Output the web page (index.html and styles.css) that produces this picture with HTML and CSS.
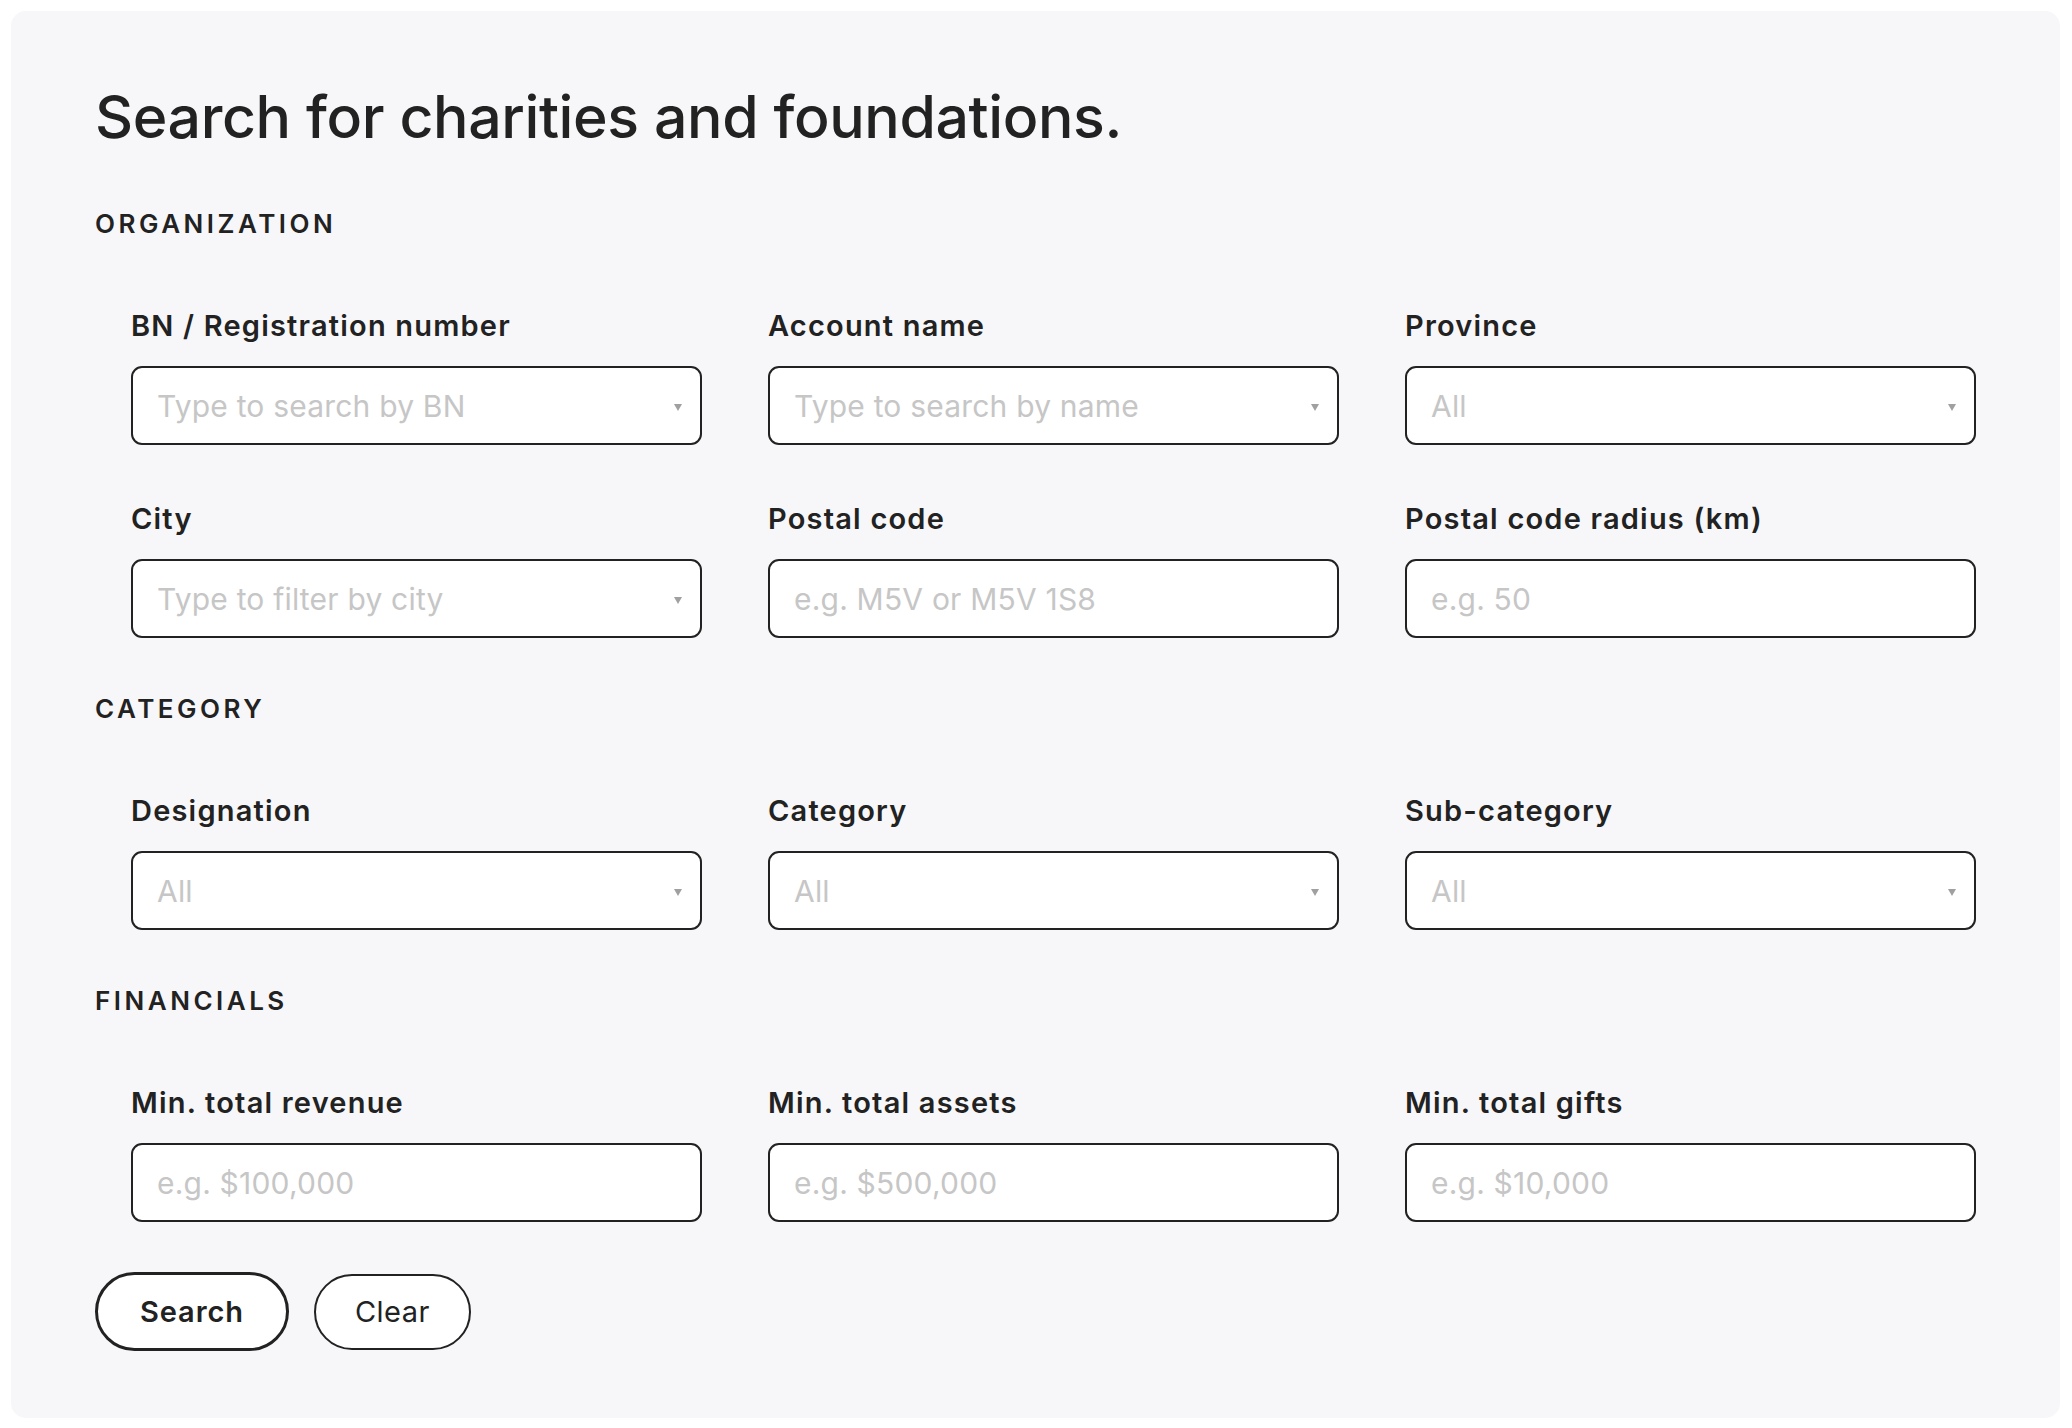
FILE: index.html
```html
<!DOCTYPE html>
<html lang="en">
<head>
<meta charset="utf-8">
<title>Search for charities and foundations</title>
<link rel="stylesheet" href="styles.css">
</head>
<body>
<main class="card">
  <h1 class="title">Search for charities and foundations.</h1>

  <h2 class="section">ORGANIZATION</h2>
  <div class="grid">
    <div class="field">
      <label class="label">BN / Registration number</label>
      <div class="control select"><input class="input" placeholder="Type to search by BN"><span class="caret"></span></div>
    </div>
    <div class="field">
      <label class="label">Account name</label>
      <div class="control select"><input class="input" placeholder="Type to search by name"><span class="caret"></span></div>
    </div>
    <div class="field">
      <label class="label">Province</label>
      <div class="control select"><input class="input" placeholder="All"><span class="caret"></span></div>
    </div>
    <div class="field">
      <label class="label">City</label>
      <div class="control select"><input class="input" placeholder="Type to filter by city"><span class="caret"></span></div>
    </div>
    <div class="field">
      <label class="label">Postal code</label>
      <div class="control"><input class="input" placeholder="e.g. M5V or M5V 1S8"></div>
    </div>
    <div class="field">
      <label class="label">Postal code radius (km)</label>
      <div class="control"><input class="input" placeholder="e.g. 50"></div>
    </div>
  </div>

  <h2 class="section">CATEGORY</h2>
  <div class="grid">
    <div class="field">
      <label class="label">Designation</label>
      <div class="control select"><input class="input" placeholder="All"><span class="caret"></span></div>
    </div>
    <div class="field">
      <label class="label">Category</label>
      <div class="control select"><input class="input" placeholder="All"><span class="caret"></span></div>
    </div>
    <div class="field">
      <label class="label">Sub-category</label>
      <div class="control select"><input class="input" placeholder="All"><span class="caret"></span></div>
    </div>
  </div>

  <h2 class="section">FINANCIALS</h2>
  <div class="grid">
    <div class="field">
      <label class="label">Min. total revenue</label>
      <div class="control"><input class="input" placeholder="e.g. $100,000"></div>
    </div>
    <div class="field">
      <label class="label">Min. total assets</label>
      <div class="control"><input class="input" placeholder="e.g. $500,000"></div>
    </div>
    <div class="field">
      <label class="label">Min. total gifts</label>
      <div class="control"><input class="input" placeholder="e.g. $10,000"></div>
    </div>
  </div>

  <div class="actions">
    <button class="btn btn-primary">Search</button>
    <button class="btn btn-secondary">Clear</button>
  </div>
</main>
</body>
</html>
```
FILE: styles.css
```css
html, body {
  margin: 0;
  background: #ffffff;
}
body {
  padding: 11px 12px 10px 11px;
  font-family: Inter, "Noto Sans", "Liberation Sans", sans-serif;
  color: #222222;
}
.card {
  background: #f7f7f9;
  border-radius: 15px;
  padding: 70px 84px 67px 84px;
}
.title {
  margin: 0;
  font-size: 59px;
  line-height: 71px;
  font-weight: 500;
  letter-spacing: -0.4px;
  color: #222222;
}
.section {
  margin: 55px 0 70px 0;
  font-size: 26px;
  line-height: 31px;
  font-weight: 600;
  letter-spacing: 3.5px;
  color: #222222;
}
.title + .section {
  margin-top: 56px;
}
.grid {
  display: grid;
  grid-template-columns: repeat(3, 1fr);
  column-gap: 66px;
  row-gap: 57px;
  padding-left: 36px;
}
.field {
  display: flex;
  flex-direction: column;
}
.label {
  font-size: 29px;
  line-height: 34px;
  font-weight: 600;
  letter-spacing: 1.2px;
  margin-bottom: 23px;
  color: #222222;
}
.control {
  position: relative;
}
.input {
  box-sizing: border-box;
  width: 100%;
  height: 79px;
  border: 2px solid #222222;
  border-radius: 11px;
  background: #ffffff;
  padding: 0 24px;
  font-family: Inter, "Noto Sans", "Liberation Sans", sans-serif;
  font-size: 30px;
  letter-spacing: 0.2px;
  color: #222222;
  outline: none;
}
.input::placeholder {
  color: #c6c6c6;
}
.caret {
  position: absolute;
  right: 20px;
  top: 38px;
  width: 0;
  height: 0;
  border-left: 4px solid transparent;
  border-right: 4px solid transparent;
  border-top: 7px solid #a0a0a0;
}
.actions {
  display: flex;
  align-items: center;
  gap: 25px;
  margin-top: 50px;
}
.btn {
  box-sizing: border-box;
  height: 76px;
  padding: 0 42px;
  border: 2px solid #222222;
  border-radius: 40px;
  background: #ffffff;
  font-family: Inter, "Noto Sans", "Liberation Sans", sans-serif;
  font-size: 29px;
  font-weight: 400;
  letter-spacing: 0.9px;
  color: #222222;
}
.btn-primary {
  height: 79px;
  border-width: 3.5px;
  padding: 0 42px;
  font-weight: 600;
}
.btn-secondary {
  padding: 0 39px;
  letter-spacing: 0.5px;
}
```
